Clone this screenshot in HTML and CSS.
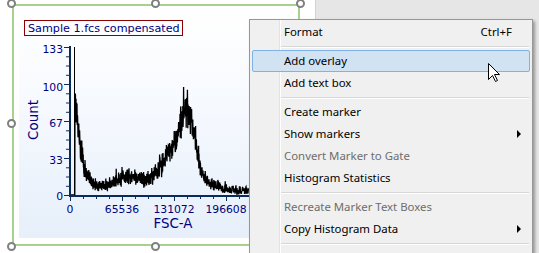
FILE: index.html
```html
<!DOCTYPE html>
<html>
<head>
<meta charset="utf-8">
<link rel="stylesheet" href="styles.css">
</head>
<body>
<div class="page">
  <div class="object">
    <div class="chart">
      <svg class="plot" width="275" height="225" viewBox="19 13 275 225">
        <rect class="title-box" x="24.5" y="20.5" width="158" height="15"/>
        <text class="title" x="28" y="32">Sample 1.fcs compensated</text>
        <g class="ticklabels">
          <text x="63" y="53" text-anchor="end">133</text>
          <text x="63" y="90.5" text-anchor="end">100</text>
          <text x="63" y="127" text-anchor="end">67</text>
          <text x="63" y="163.5" text-anchor="end">33</text>
          <text x="63" y="200" text-anchor="end">0</text>
          <text x="70" y="213" text-anchor="middle">0</text>
          <text x="122" y="213" text-anchor="middle">65536</text>
          <text x="174" y="213" text-anchor="middle">131072</text>
          <text x="226" y="213" text-anchor="middle">196608</text>
        </g>
        <text class="axtitle" x="173" y="228" text-anchor="middle">FSC-A</text>
        <text class="axtitle" transform="translate(38,120) rotate(-90)" text-anchor="middle">Count</text>
        <path id="hist" class="hist" d=""/>
        <path id="spike" class="spike" d="M74.5 195 V47"/>
        <path id="ticks" class="ticks" d=""/>
        <path class="axis" d="M70 46 V196 H294"/>
      </svg>
    </div>
    <span class="handle h-tl"></span>
    <span class="handle h-tc"></span>
    <span class="handle h-tr"></span>
    <span class="handle h-ml"></span>
    <span class="handle h-mr"></span>
    <span class="handle h-bl"></span>
    <span class="handle h-bc"></span>
    <span class="handle h-br"></span>
  </div>
</div>

<div class="menu">
  <div class="item"><span>Format</span><span class="key">Ctrl+F</span></div>
  <div class="sep"></div>
  <div class="item hot">Add overlay</div>
  <div class="item">Add text box</div>
  <div class="sep"></div>
  <div class="item">Create marker</div>
  <div class="item sub">Show markers</div>
  <div class="item dis">Convert Marker to Gate</div>
  <div class="item">Histogram Statistics</div>
  <div class="sep"></div>
  <div class="item dis">Recreate Marker Text Boxes</div>
  <div class="item sub">Copy Histogram Data</div>
  <div class="sep"></div>
</div>

<svg class="cursor" width="13" height="20" viewBox="0 0 13 20">
  <path d="M0.5 0.5 V16.5 L4.5 12.5 L7.5 18.5 L9.5 17.5 L6.5 11.5 H11.5 Z" fill="#fff" stroke="#000" stroke-width="1" stroke-linejoin="miter"/>
</svg>

<script src="script.js"></script>
</body>
</html>
```

FILE: styles.css
```css
* { box-sizing: border-box; }
html, body {
  margin: 0;
  padding: 0;
  width: 539px;
  height: 253px;
  overflow: hidden;
  background: #e6e6e6;
}
body { position: relative; }

.page {
  position: relative;
  width: 316px;
  height: 253px;
  background: #ffffff;
  border-right: 1px solid #d3d3d3;
}

.object {
  position: absolute;
  left: 12px;
  top: 4px;
  width: 288px;
  height: 242px;
  border: 2px solid #a9d18e;
}

.chart {
  position: absolute;
  left: 5px;
  top: 7px;
  width: 275px;
  height: 225px;
  background: linear-gradient(to bottom, #ffffff 0%, #f4f8fe 50%, #e6effa 100%);
}
.plot { display: block; }

.title-box { fill: none; stroke: #8b0000; stroke-width: 1; }
.title {
  font-family: "DejaVu Sans", Verdana, sans-serif;
  font-size: 11.2px;
  fill: #000080;
}
.ticklabels text {
  font-family: "DejaVu Sans", Verdana, sans-serif;
  font-size: 10.8px;
  fill: #000080;
}
.axtitle {
  font-family: "DejaVu Sans", Verdana, sans-serif;
  font-size: 13.4px;
  fill: #000080;
}
.hist { fill: none; stroke: #000; stroke-width: 1.3; }
.spike { fill: none; stroke: #000; stroke-width: 1; }
.ticks { fill: none; stroke: #0b2b5c; stroke-width: 1; }
.axis { fill: none; stroke: #0b2b5c; stroke-width: 2; }

.handle {
  position: absolute;
  width: 9px;
  height: 9px;
  border: 2px solid #808080;
  border-radius: 50%;
  background: #ffffff;
}
.h-tl { left: -7px; top: -7px; }
.h-tc { left: 137px; top: -7px; }
.h-tr { right: -7px; top: -7px; }
.h-ml { left: -7px; top: 113px; }
.h-mr { right: -7px; top: 113px; }
.h-bl { left: -7px; bottom: -7px; }
.h-bc { left: 137px; bottom: -7px; }
.h-br { right: -7px; bottom: -7px; }

.menu {
  position: absolute;
  left: 249px;
  top: 19px;
  width: 284px;
  height: 260px;
  background: #f0f0f0;
  border: 1px solid #979797;
  padding: 1px 2px;
  box-shadow: 2px 2px 3px rgba(0, 0, 0, 0.35);
  font-family: "Noto Sans", "Open Sans", sans-serif;
  font-size: 11.4px;
  color: #000;
}
.menu::before {
  content: "";
  position: absolute;
  left: 29px;
  top: 0;
  bottom: 0;
  width: 1px;
  background: #e2e3e3;
  box-shadow: 1px 0 0 #ffffff;
}
.item {
  position: relative;
  height: 22px;
  line-height: 22px;
  padding: 0 18px 0 32px;
  display: flex;
  justify-content: space-between;
  white-space: nowrap;
}
.item.hot {
  background: #d1e2f3;
  border: 1px solid #80b2e8;
  border-radius: 2px;
  padding-left: 31px;
  line-height: 20px;
}
.item.dis { color: #6d6d6d; }
.item.sub::after {
  content: "";
  position: absolute;
  right: 9px;
  top: 7px;
  border-left: 4px solid #000;
  border-top: 4px solid transparent;
  border-bottom: 4px solid transparent;
}
.sep {
  height: 7px;
  margin-left: 28px;
  margin-right: 1px;
  padding-top: 3px;
}
.sep::before {
  content: "";
  display: block;
  height: 1px;
  background: #d7d7d7;
  box-shadow: 0 1px 0 #ffffff;
}

.cursor {
  position: absolute;
  left: 488px;
  top: 63px;
}
```

FILE: script.js
```js
(function () {
  var seed = 12345;
  function rnd() {
    seed |= 0; seed = seed + 0x6D2B79F5 | 0;
    var t = Math.imul(seed ^ seed >>> 15, 1 | seed);
    t = t + Math.imul(t ^ t >>> 7, 61 | t) ^ t;
    return ((t ^ t >>> 14) >>> 0) / 4294967296;
  }
  var pts = [
    [70, 195], [74.8, 195], [75, 92], [76.7, 114], [78.3, 131], [80, 143],
    [81.7, 152], [83.3, 164], [86, 173], [90, 180], [96.7, 186], [103, 186],
    [110, 184], [117, 180], [123, 177], [130, 177], [136.7, 178], [142, 180],
    [146.7, 180], [151, 178], [156.7, 173], [161, 167], [166.7, 157],
    [171, 149], [176.7, 137], [180, 127], [183.3, 117], [186.7, 108],
    [189, 114], [191.7, 123], [195, 139], [198.3, 158], [201.7, 172],
    [206.7, 181], [211, 184], [216.7, 187], [226.7, 189.5], [240, 190.5],
    [249, 190.5]
  ];
  function base(x) {
    for (var i = 0; i < pts.length - 1; i++) {
      if (x >= pts[i][0] && x <= pts[i + 1][0]) {
        var t = (x - pts[i][0]) / (pts[i + 1][0] - pts[i][0]);
        return pts[i][1] + t * (pts[i + 1][1] - pts[i][1]);
      }
    }
    return 195;
  }
  var d = "M70 195 L74.8 195";
  for (var x = 75; x <= 249; x += 0.2) {
    var y = base(x);
    var cnt = (195 - y) / 1.113;
    var sd = Math.sqrt(Math.max(cnt, 0)) * 1.113 * 1.1;
    var n = (rnd() + rnd() - 1) * 2 * sd;
    if (rnd() < 0.05) n -= sd * 1.3;
    var yy = Math.min(195, y + n);
    d += " L" + x.toFixed(2) + " " + yy.toFixed(2);
  }
  document.getElementById("hist").setAttribute("d", d);

  var t = "";
  var y0 = 195.5, scale = 148 / 133;
  for (var k = 0; k <= 16; k++) {
    var yy2 = y0 - k * (133 / 16) * scale;
    var major = k % 4 === 0;
    t += " M" + (major ? 64 : 66) + " " + yy2.toFixed(1) + " H70";
  }
  for (var i = 0; i <= 13; i++) {
    var xx = 70.5 + i * 13;
    var mj = i % 4 === 0;
    t += " M" + xx.toFixed(1) + " 196 V" + (mj ? 201 : 199);
  }
  document.getElementById("ticks").setAttribute("d", t);
})();
```
